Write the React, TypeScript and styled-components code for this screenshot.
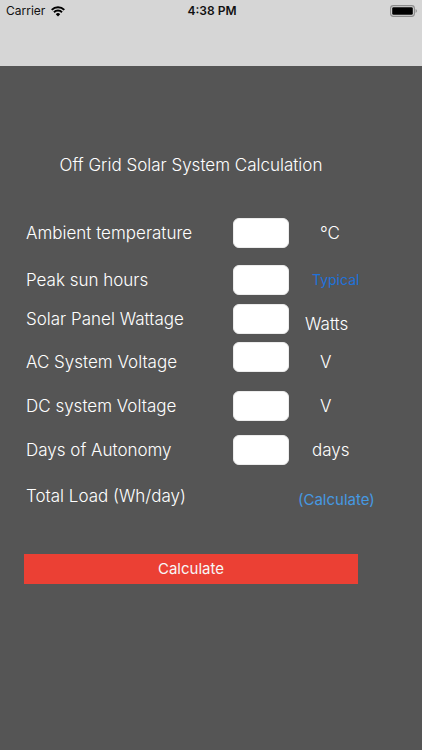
import React from "react";
import styled, { createGlobalStyle } from "styled-components";

const GlobalStyle = createGlobalStyle`
  *, *::before, *::after {
    box-sizing: border-box;
  }

  body {
    margin: 0;
    background: #555555;
    font-family: Inter, "Liberation Sans", sans-serif;
    font-size: 17px;
    font-weight: 300;
    line-height: 20px;
    color: #ffffff;
  }
`;

const Screen = styled.div`
  display: flex;
  flex-direction: column;
  min-height: 100vh;
`;

const TopBar = styled.header`
  padding: 0 4px 44px 6px;
  background: #d6d6d6;
`;

const StatusBar = styled.div`
  display: grid;
  grid-template-columns: 1fr auto 1fr;
  align-items: center;
  height: 22px;
  font-size: 12px;
  font-weight: 400;
  line-height: 16px;
  color: #111111;
`;

const Carrier = styled.div`
  display: flex;
  align-items: center;
  gap: 6px;
`;

const Clock = styled.time`
  font-weight: 600;
`;

const BatterySlot = styled.div`
  display: flex;
  justify-content: flex-end;
`;

const Form = styled.form`
  display: flex;
  flex-direction: column;
  padding-top: 89px;
`;

const Title = styled.h1`
  margin: 0 64px 43px 24px;
  font-size: 17px;
  font-weight: 300;
  text-align: center;
  white-space: nowrap;
`;

type Align = "start" | "center" | "end";

const Row = styled.div<{ $gap: number }>`
  display: grid;
  grid-template-columns: minmax(0, 207fr) 56px minmax(0, 133fr);
  min-height: 24px;
  margin-bottom: ${({ $gap }) => $gap}px;
  padding-left: 26px;
`;

const Label = styled.label<{ $align: Align }>`
  align-self: ${({ $align }) => $align};
  white-space: nowrap;
`;

const Field = styled.input`
  width: 56px;
  height: 30px;
  padding: 0 8px;
  border: 1px solid #ececec;
  border-radius: 6px;
  background: #ffffff;
  font: inherit;
  color: #111111;
`;

const Unit = styled.span<{ $align: Align; $indent: number }>`
  grid-column: 3;
  align-self: ${({ $align }) => $align};
  padding-left: ${({ $indent }) => $indent}px;
  white-space: nowrap;
`;

const TextButton = styled.button<{ $color: string; $size: number }>`
  display: block;
  padding: 0;
  border: 0;
  background: none;
  font: inherit;
  font-size: ${({ $size }) => $size}px;
  font-weight: 400;
  color: ${({ $color }) => $color};
  cursor: pointer;
`;

const SubmitButton = styled.button`
  height: 30px;
  margin: 0 64px 0 24px;
  padding: 0;
  border: 0;
  background: #eb4034;
  font: inherit;
  font-size: 15px;
  font-weight: 400;
  color: #f7f7f7;
  cursor: pointer;
`;

interface Entry {
  id: string;
  label: string;
  unit?: string;
  action?: { text: string; color: string; size: number };
  hasField: boolean;
  labelAlign: Align;
  unitAlign: Align;
  indent: number;
  gap: number;
}

const entries: Entry[] = [
  { id: "temperature", label: "Ambient temperature", unit: "°C", hasField: true, labelAlign: "center", unitAlign: "center", indent: 31, gap: 17 },
  { id: "sun-hours", label: "Peak sun hours", action: { text: "Typical", color: "#1f72da", size: 14 }, hasField: true, labelAlign: "center", unitAlign: "center", indent: 23, gap: 9 },
  { id: "wattage", label: "Solar Panel Wattage", unit: "Watts", hasField: true, labelAlign: "center", unitAlign: "end", indent: 16, gap: 8 },
  { id: "ac-voltage", label: "AC System Voltage", unit: "V", hasField: true, labelAlign: "end", unitAlign: "end", indent: 31, gap: 19 },
  { id: "dc-voltage", label: "DC system Voltage", unit: "V", hasField: true, labelAlign: "center", unitAlign: "center", indent: 31, gap: 14 },
  { id: "autonomy", label: "Days of Autonomy", unit: "days", hasField: true, labelAlign: "center", unitAlign: "center", indent: 23, gap: 21 },
  { id: "total-load", label: "Total Load (Wh/day)", action: { text: "(Calculate)", color: "#4699e2", size: 15 }, hasField: false, labelAlign: "start", unitAlign: "end", indent: 9, gap: 44 },
];

const WifiIcon = () => (
  <svg width="14" height="11" viewBox="0 0 14 11" aria-hidden="true">
    <g fill="none" stroke="#000000" strokeWidth="2">
      <path d="M0.7 3.9a8.9 8.9 0 0 1 12.6 0" />
      <path d="M3 6.3a5.6 5.6 0 0 1 8 0" />
    </g>
    <path d="M7 10.5 4.8 8.2a3.1 3.1 0 0 1 4.4 0z" fill="#000000" />
  </svg>
);

const BatteryIcon = () => (
  <svg width="28" height="12" viewBox="0 0 28 12" aria-hidden="true">
    <rect x="0.6" y="0.6" width="23.8" height="10.8" rx="2.8" fill="#d6d6d6" stroke="#8c8c8c" strokeWidth="1.1" />
    <rect x="2.2" y="2.2" width="20.6" height="7.6" rx="1.3" fill="#000000" />
    <path d="M25.6 4.1c1.7.5 1.7 3.3 0 3.8z" fill="#8c8c8c" />
  </svg>
);

export default function App() {
  return (
    <>
      <GlobalStyle />
      <Screen>
        <TopBar>
          <StatusBar>
            <Carrier>
              <span>Carrier</span>
              <WifiIcon />
            </Carrier>
            <Clock>4:38 PM</Clock>
            <BatterySlot>
              <BatteryIcon />
            </BatterySlot>
          </StatusBar>
        </TopBar>
        <Form onSubmit={(event) => event.preventDefault()}>
          <Title>Off Grid Solar System Calculation</Title>
          {entries.map((entry) => (
            <Row key={entry.id} $gap={entry.gap}>
              <Label
                id={`${entry.id}-label`}
                htmlFor={entry.hasField ? entry.id : `${entry.id}-action`}
                $align={entry.labelAlign}
              >
                {entry.label}
              </Label>
              {entry.hasField && <Field id={entry.id} type="text" inputMode="decimal" />}
              <Unit $align={entry.unitAlign} $indent={entry.indent}>
                {entry.action ? (
                  <TextButton
                    id={`${entry.id}-action`}
                    type="button"
                    $color={entry.action.color}
                    $size={entry.action.size}
                  >
                    {entry.action.text}
                  </TextButton>
                ) : (
                  entry.unit
                )}
              </Unit>
            </Row>
          ))}
          <SubmitButton type="submit">Calculate</SubmitButton>
        </Form>
      </Screen>
    </>
  );
}
